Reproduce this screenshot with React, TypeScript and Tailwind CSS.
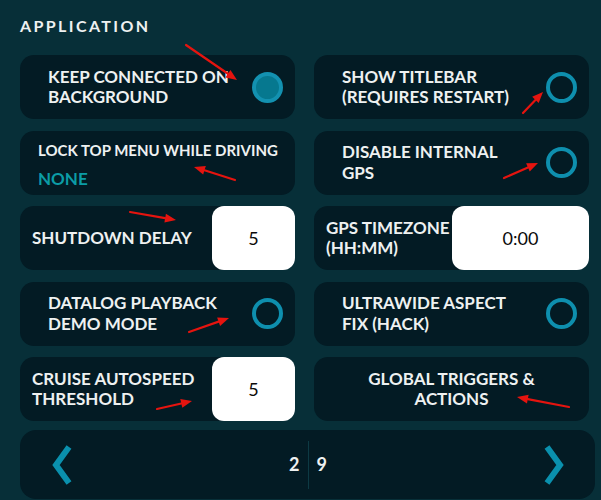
import React from 'react'

type Arrow = [number, number, number, number]

// red annotation arrows drawn over the screenshot: tail x,y -> head x,y
const arrows: Arrow[] = [
  [186, 45, 237, 80],
  [523, 113, 543, 92],
  [235, 180, 194, 167],
  [504, 178, 538, 163],
  [130, 212, 176, 220],
  [189, 332, 229, 318],
  [157, 409, 192, 401],
  [569, 407, 517, 397],
]

const ArrowOverlay = () => (
  <svg className="absolute inset-0 pointer-events-none" width={601} height={500}>
    {arrows.map(([x1, y1, x2, y2], i) => {
      const dx = x2 - x1
      const dy = y2 - y1
      const len = Math.hypot(dx, dy)
      const ux = dx / len
      const uy = dy / len
      const bx = x2 - ux * 11
      const by = y2 - uy * 11
      const pts = `${x2},${y2} ${bx - uy * 4.5},${by + ux * 4.5} ${bx + uy * 4.5},${by - ux * 4.5}`
      return (
        <g key={i}>
          <line x1={x1} y1={y1} x2={bx} y2={by} stroke="#e5140f" strokeWidth={2.2} strokeLinecap="round" />
          <polygon points={pts} fill="#e5140f" />
        </g>
      )
    })}
  </svg>
)

const Toggle = ({ on }: { on?: boolean }) => (
  <div
    className={`w-[31px] h-[31px] shrink-0 rounded-full border-[4.5px] ${
      on ? 'border-[#1391b0] bg-[#06788f]' : 'border-[#0e8fae]'
    }`}
  />
)

const ToggleCard = ({ label, on }: { label: React.ReactNode; on?: boolean }) => (
  <div className="h-[64px] rounded-[14px] bg-[#031b24] flex items-center justify-between pl-[28px] pr-[12px]">
    <div className="text-[17px] leading-[20.5px] font-bold">{label}</div>
    <Toggle on={on} />
  </div>
)

const InputCard = ({ label, value, boxW }: { label: React.ReactNode; value: string; boxW: string }) => (
  <div className="h-[64px] rounded-[14px] bg-[#031b24] flex items-center justify-between pl-[12px]">
    <div className="text-[17px] leading-[20.5px] font-bold">{label}</div>
    <div className={`${boxW} self-stretch rounded-[12px] bg-white flex items-center justify-center text-[18px] text-[#0a0a0a]`}>
      {value}
    </div>
  </div>
)

export default function App() {
  return (
    <div className="relative w-[601px] h-[500px] overflow-hidden bg-[#072f38] font-['Lato',sans-serif] text-[#eef1f1] pl-[20px] pr-[12px] pt-[16px]">
      <div className="text-[16px] leading-[20px] font-bold tracking-[2.4px]">APPLICATION</div>

      <div className="mt-[19px] grid grid-cols-2 gap-x-[19px] gap-y-[11.5px]">
        <ToggleCard label={<>KEEP CONNECTED ON<br />BACKGROUND</>} on />
        <ToggleCard label={<>SHOW TITLEBAR<br />(REQUIRES RESTART)</>} />

        <div className="h-[64px] rounded-[14px] bg-[#031b24] flex flex-col pl-[18px] pt-[9px]">
          <div className="text-[15px] leading-[20px] font-bold">LOCK TOP MENU WHILE DRIVING</div>
          <div className="mt-[8px] text-[17px] leading-[22px] font-bold text-[#0b9ca6]">NONE</div>
        </div>
        <ToggleCard label={<>DISABLE INTERNAL<br />GPS</>} />

        <InputCard label="SHUTDOWN DELAY" value="5" boxW="w-[83px]" />
        <InputCard label={<>GPS TIMEZONE<br />(HH:MM)</>} value="0:00" boxW="w-[137px]" />

        <ToggleCard label={<>DATALOG PLAYBACK<br />DEMO MODE</>} />
        <ToggleCard label={<>ULTRAWIDE ASPECT<br />FIX (HACK)</>} />

        <InputCard label={<>CRUISE AUTOSPEED<br />THRESHOLD</>} value="5" boxW="w-[83px]" />
        <div className="h-[64px] rounded-[14px] bg-[#031b24] flex items-center justify-center text-center text-[17px] leading-[20.5px] font-bold">
          GLOBAL TRIGGERS &amp;<br />ACTIONS
        </div>
      </div>

      {/* pager */}
      <div className="mt-[9px] mr-[-6px] h-[69px] rounded-[16px] bg-[#031b24] flex items-center justify-between pl-[32px] pr-[31px]">
        <svg width="20" height="40" viewBox="0 0 20 40">
          <polyline points="17,2 4,20 17,38" fill="none" stroke="#0a90ad" strokeWidth="6" />
        </svg>
        <div className="flex items-center gap-[8px] text-[18px] font-bold">
          <span>2</span>
          <div className="w-px h-[48px] bg-[#0d3a44]" />
          <span>9</span>
        </div>
        <svg width="20" height="40" viewBox="0 0 20 40">
          <polyline points="3,2 16,20 3,38" fill="none" stroke="#0a90ad" strokeWidth="6" />
        </svg>
      </div>

      <ArrowOverlay />
    </div>
  )
}
